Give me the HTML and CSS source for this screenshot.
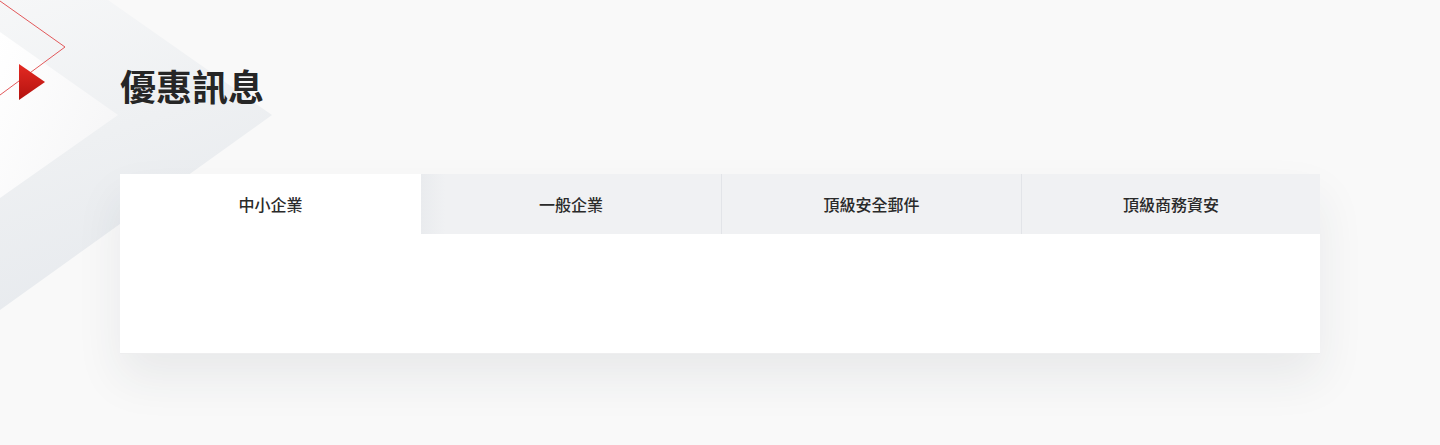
FILE: index.html
```html
<!DOCTYPE html>
<html lang="zh-Hant">
<head>
<meta charset="utf-8">
<title>優惠訊息</title>
<link rel="stylesheet" href="styles.css">
</head>
<body>
<section class="promo">
  <svg class="deco" width="300" height="330" viewBox="0 0 300 330" aria-hidden="true">
    <defs>
      <linearGradient id="band" x1="0" y1="0" x2="0.3" y2="1">
        <stop offset="0" stop-color="#f6f7f8"/>
        <stop offset="0.5" stop-color="#eef0f2"/>
        <stop offset="1" stop-color="#e7eaee"/>
      </linearGradient>
      <linearGradient id="inner" x1="0" y1="0" x2="1" y2="0.6">
        <stop offset="0" stop-color="#ffffff"/>
        <stop offset="1" stop-color="#f6f6f7"/>
      </linearGradient>
      <linearGradient id="red" x1="0" y1="0" x2="0" y2="1">
        <stop offset="0" stop-color="#e42a22"/>
        <stop offset="1" stop-color="#b3120f"/>
      </linearGradient>
    </defs>
    <polygon points="0,0 108,0 272,115 0,310" fill="url(#band)"/>
    <polygon points="0,32 118,115 0,198" fill="url(#inner)"/>
    <polyline points="0,1 65,47 0,95" fill="none" stroke="#e2585a" stroke-width="1"/>
    <polygon points="19,64 45,82 19,100" fill="url(#red)"/>
  </svg>
  <div class="container">
    <h2 class="title">優惠訊息</h2>
    <div class="card">
      <div class="tabs">
        <div class="tab active">中小企業</div>
        <div class="tab first-off">一般企業</div>
        <div class="tab">頂級安全郵件</div>
        <div class="tab">頂級商務資安</div>
      </div>
      <div class="panel"></div>
    </div>
  </div>
</section>
</body>
</html>
```
FILE: styles.css
```css
* { box-sizing: border-box; }
html, body { margin: 0; padding: 0; }
body {
  background: #f9f9f9;
  font-family: "Noto Sans CJK TC", "Noto Sans", sans-serif;
  color: #222;
}
.promo {
  position: relative;
  height: 445px;
  overflow: hidden;
}
.deco {
  position: absolute;
  left: 0;
  top: 0;
  z-index: 0;
}
.container {
  position: relative;
  z-index: 1;
  width: 1200px;
  margin: 0 auto;
  padding-top: 64px;
}
.title {
  margin: 0;
  font-size: 36px;
  line-height: 43px;
  font-weight: 700;
  color: #262626;
}
.card {
  margin-top: 67px;
  background: #fff;
  box-shadow: 0 24px 44px rgba(40, 50, 70, 0.08);
}
.tabs {
  display: grid;
  grid-template-columns: 301px 300px 300px 299px;
  height: 60px;
}
.tab {
  display: flex;
  align-items: center;
  justify-content: center;
  font-size: 16px;
  font-weight: 500;
  color: #2a2a2a;
  background: #f0f1f3;
  border-left: 1px solid #e2e4e8;
}
.tab.active {
  background: #fff;
  border-left: none;
}
.tab.first-off {
  border-left: none;
  background: linear-gradient(90deg, #e9ebee 0, #f0f1f3 24px, #f0f1f3 100%);
}
.panel {
  height: 120px;
  background: #fff;
  border-bottom: 1px solid #eeeeef;
}
```
